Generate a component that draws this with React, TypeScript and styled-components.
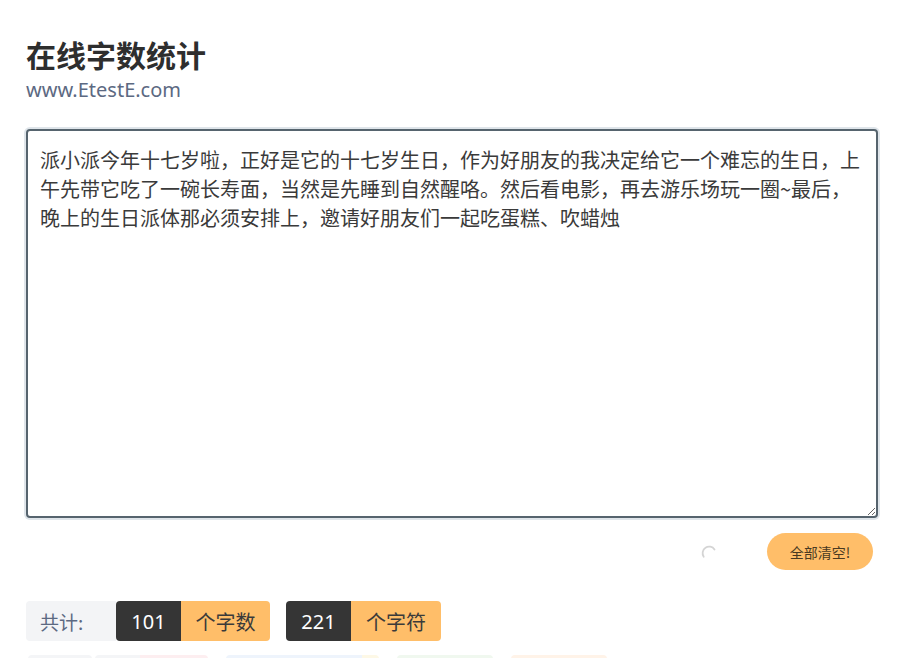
import { useEffect, useRef } from 'react';
import styled, { createGlobalStyle } from 'styled-components';

const GlobalStyle = createGlobalStyle`
  html, body {
    margin: 0;
    background: #fff;
    font-family: "Noto Sans", "Noto Sans CJK SC", sans-serif;
    overflow: hidden;
  }
`;

const Page = styled.main`
  width: 852px;
  margin-left: 26px;
  padding-top: 32px;
`;

const Title = styled.h1`
  margin: 0;
  font-size: 30px;
  line-height: 44px;
  font-weight: 700;
  color: #2e2e2e;
  font-family: "Noto Sans CJK SC", sans-serif;
`;

const Site = styled.div`
  font-size: 20px;
  line-height: 28px;
  color: #5c6982;
`;

const Editor = styled.textarea`
  display: block;
  box-sizing: border-box;
  width: 852px;
  height: 389px;
  margin-top: 25px;
  padding: 14px 12px;
  border: 2px solid #56646e;
  border-radius: 4px;
  box-shadow: 0 0 0 2px #dfe5ea;
  outline: none;
  resize: vertical;
  font-family: "Noto Sans CJK SC", sans-serif;
  font-size: 20px;
  line-height: 29px;
  color: #3a3a3a;
  caret-color: #333;
`;

const Actions = styled.div`
  display: flex;
  justify-content: flex-end;
  align-items: center;
  gap: 48px;
  margin-top: 15px;
  padding-right: 5px;
`;

const Spinner = styled.svg`
  width: 18px;
  height: 18px;
  margin-top: 4px;
`;

const ClearButton = styled.button`
  height: 37px;
  width: 106px;
  border: none;
  border-radius: 19px;
  background: #ffbe69;
  color: #4a3a22;
  font-family: "Noto Sans CJK SC", sans-serif;
  font-size: 14px;
  cursor: pointer;
`;

const Stats = styled.div`
  display: flex;
  align-items: center;
  gap: 16px;
  margin-top: 31px;
`;

const Group = styled.div`
  display: flex;
  height: 40px;
  border-radius: 4px;
  overflow: hidden;
`;

const Cell = styled.span<{ $bg: string; $fg: string; $w: number }>`
  display: flex;
  align-items: center;
  justify-content: center;
  width: ${(p) => p.$w}px;
  background: ${(p) => p.$bg};
  color: ${(p) => p.$fg};
  font-size: 20px;
  font-family: "Noto Sans", "Noto Sans CJK SC", sans-serif;
`;

const Label = styled.div`
  display: flex;
  align-items: center;
  height: 40px;
  padding-left: 14px;
  width: 90px;
  box-sizing: border-box;
  background: #f3f4f6;
  border-radius: 4px 0 0 4px;
  color: #5c6982;
  font-size: 19px;
  font-family: "Noto Sans CJK SC", sans-serif;
`;

const Joined = styled.div`
  display: flex;
`;

const Tags = styled.div`
  display: flex;
  gap: 18px;
  margin-top: 14px;
  margin-left: 2px;
`;

const Tag = styled.div<{ $pull?: boolean }>`
  display: flex;
  height: 36px;
  border-radius: 4px;
  overflow: hidden;
  margin-left: ${(p) => (p.$pull ? '-15px' : '0')};
`;

const TagPart = styled.span<{ $bg: string; $w: number }>`
  width: ${(p) => p.$w}px;
  background: ${(p) => p.$bg};
`;

const text =
  '派小派今年十七岁啦，正好是它的十七岁生日，作为好朋友的我决定给它一个难忘的生日，上午先带它吃了一碗长寿面，当然是先睡到自然醒咯。然后看电影，再去游乐场玩一圈~最后，晚上的生日派体那必须安排上，邀请好朋友们一起吃蛋糕、吹蜡烛';

export default function App() {
  const ref = useRef<HTMLTextAreaElement>(null);

  useEffect(() => {
    const el = ref.current;
    if (el) {
      el.focus();
      el.setSelectionRange(text.length, text.length);
    }
  }, []);

  return (
    <>
      <GlobalStyle />
      <Page>
        <Title>在线字数统计</Title>
        <Site>www.EtestE.com</Site>
        <Editor ref={ref} defaultValue={text} />
        <Actions>
          <Spinner viewBox="0 0 20 20">
            <path d="M3 13 A7 7 0 0 1 15 5" fill="none" stroke="#d4d4d4" strokeWidth="2" strokeLinecap="round" />
          </Spinner>
          <ClearButton>全部清空!</ClearButton>
        </Actions>
        <Stats>
          <Joined>
            <Label>共计:</Label>
            <Group>
              <Cell $bg="#353535" $fg="#fff" $w={65}>101</Cell>
              <Cell $bg="#ffbe69" $fg="#3a3a3a" $w={89}>个字数</Cell>
            </Group>
          </Joined>
          <Group>
            <Cell $bg="#353535" $fg="#fff" $w={65}>221</Cell>
            <Cell $bg="#ffbe69" $fg="#3a3a3a" $w={90}>个字符</Cell>
          </Group>
        </Stats>
        <Tags>
          <Tag>
            <TagPart $bg="#f4f5f7" $w={64} />
          </Tag>
          <Tag $pull>
            <TagPart $bg="#f4f5f7" $w={45} />
            <TagPart $bg="#fdeef0" $w={68} />
          </Tag>
          <Tag>
            <TagPart $bg="#eef4fc" $w={136} />
            <TagPart $bg="#fdf8e6" $w={17} />
          </Tag>
          <Tag>
            <TagPart $bg="#f0f8ef" $w={96} />
          </Tag>
          <Tag>
            <TagPart $bg="#fff3e8" $w={96} />
          </Tag>
        </Tags>
      </Page>
    </>
  );
}
